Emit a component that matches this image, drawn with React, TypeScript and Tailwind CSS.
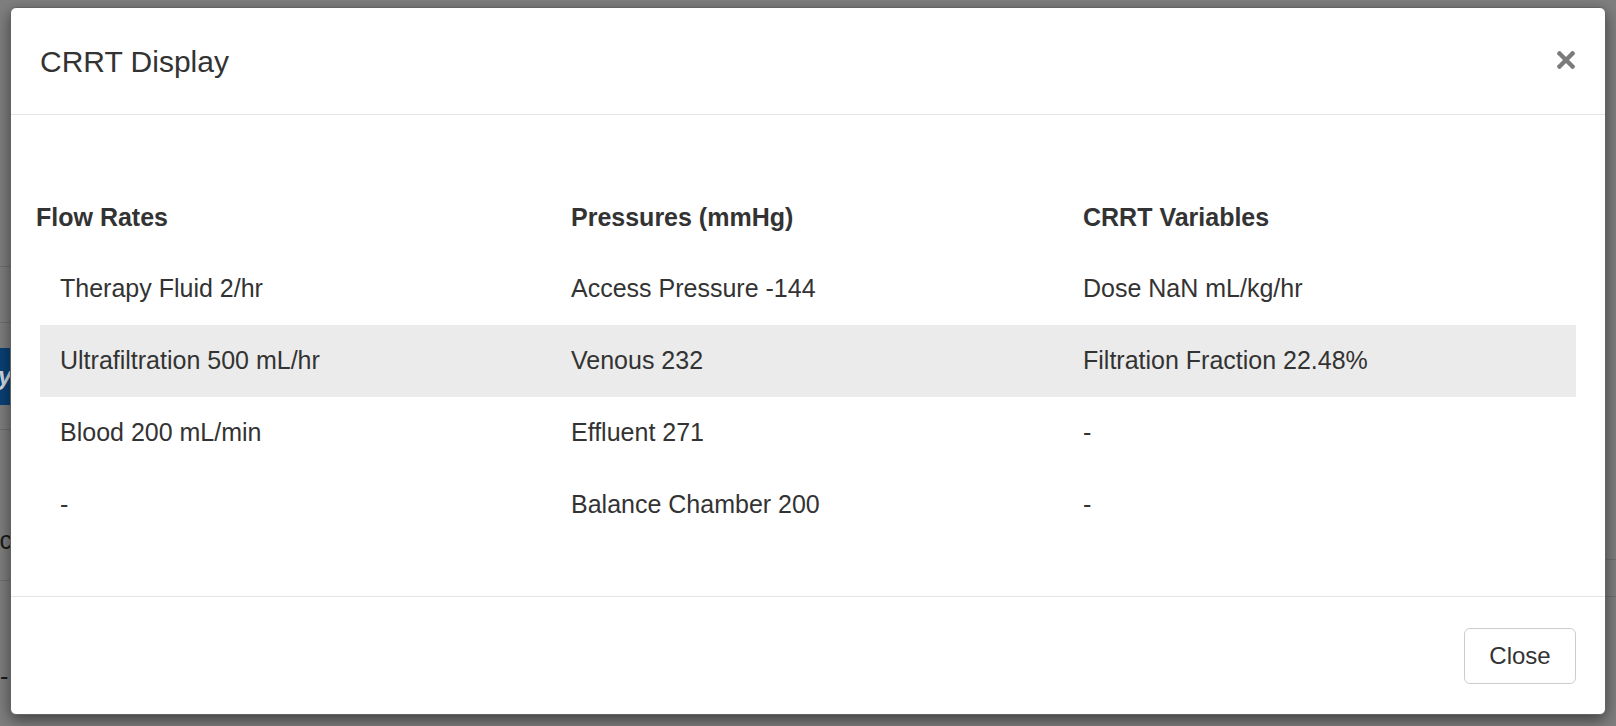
const flowRates = ['Therapy Fluid 2/hr', 'Ultrafiltration 500 mL/hr', 'Blood 200 mL/min', '-'];
const pressures = ['Access Pressure -144', 'Venous 232', 'Effluent 271', 'Balance Chamber 200'];
const variables = ['Dose NaN mL/kg/hr', 'Filtration Fraction 22.48%', '-', '-'];

function Backdrop() {
  // the page behind the modal, mostly hidden by it
  return (
    <div className="flex h-full w-full justify-between">
      <div className="flex w-[12px] flex-col">
        <div className="h-[267px] border-b border-[#6e6e6e]" />
        <div className="h-[56px] border-b border-[#6e6e6e]" />
        <div className="mt-[25px] flex h-[57px] items-center justify-end bg-[#0a4177] text-[25px] font-semibold italic text-[#d4dbe4]">
          y
        </div>
        <div className="h-[25px] border-b border-[#6e6e6e]" />
        <div className="flex h-[151px] items-start justify-end border-b border-[#6e6e6e] pt-[95px] text-[25px] leading-[30px] text-[#1a1a1a]">
          oc
        </div>
        <div className="flex flex-1 items-start pt-[80px] text-[25px] leading-[30px] text-[#1a1a1a]">-</div>
      </div>
      <div className="flex w-[12px] flex-col">
        <div className="h-[560px] border-b border-[#6e6e6e]" />
        <div className="h-[37px] border-b border-[#6e6e6e]" />
      </div>
    </div>
  );
}

export default function App() {
  return (
    <div className="relative h-[726px] w-[1616px] overflow-hidden bg-[#7f7f7f] font-['Liberation_Sans',Arial,sans-serif] text-[#333333]">
      <Backdrop />

      <div className="absolute left-[10px] top-[7px] flex h-[708px] w-[1596px] flex-col rounded-[6px] border border-[#636363] bg-white shadow-[0_5px_15px_rgba(0,0,0,0.5)]">
        <div className="flex h-[107px] shrink-0 items-center justify-between border-b border-[#e5e5e5] px-[29px]">
          <h4 className="mt-[2px] text-[30px] leading-none">CRRT Display</h4>
          <button className="mr-[1px] mt-[-2px] flex h-[18px] w-[18px] items-center justify-center">
            <svg width="18" height="18" viewBox="0 0 18 18">
              <path d="M2.5 2.5 L15.5 15.5 M15.5 2.5 L2.5 15.5" stroke="#7b7b7b" strokeWidth="4.4" strokeLinecap="square" />
            </svg>
          </button>
        </div>

        <div className="flex-1 px-[29px] pt-[84px]">
          <div className="mb-[18px] grid h-[36px] grid-cols-[531px_512px_1fr] items-center text-[25px] font-bold">
            <div className="ml-[-4px]">Flow Rates</div>
            <div>Pressures (mmHg)</div>
            <div>CRRT Variables</div>
          </div>
          {flowRates.map((f, i) => (
            <div
              key={i}
              className={`grid h-[72px] grid-cols-[531px_512px_1fr] items-center text-[25px] ${i === 1 ? 'bg-[#ebebeb]' : ''}`}
            >
              <div className="pl-[20px]">{f}</div>
              <div>{pressures[i]}</div>
              <div>{variables[i]}</div>
            </div>
          ))}
        </div>

        <div className="flex h-[118px] shrink-0 items-center justify-end border-t border-[#e5e5e5] px-[29px]">
          <button className="h-[56px] w-[112px] rounded-[6px] border border-[#cccccc] bg-white text-[24px] text-[#333333]">
            Close
          </button>
        </div>
      </div>
    </div>
  );
}
